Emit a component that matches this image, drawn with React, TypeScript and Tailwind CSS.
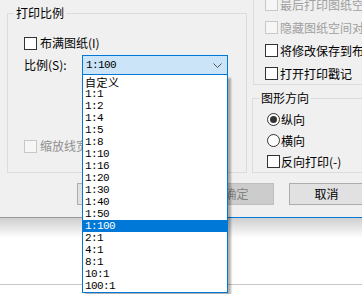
import clsx from "clsx";

const scales = [
  "自定义",
  "1:1",
  "1:2",
  "1:4",
  "1:5",
  "1:8",
  "1:10",
  "1:16",
  "1:20",
  "1:30",
  "1:40",
  "1:50",
  "1:100",
  "2:1",
  "4:1",
  "8:1",
  "10:1",
  "100:1",
];

const Check = ({ disabled }: { disabled?: boolean }) => (
  <span
    className={clsx(
      "w-[13px] h-[13px] border shrink-0",
      disabled ? "border-[#c8c8c8] bg-[#f6f6f6]" : "border-[#333] bg-white"
    )}
  />
);

const Radio = ({ checked }: { checked?: boolean }) => (
  <span className="w-[13px] h-[13px] rounded-full border border-[#333] bg-white shrink-0 flex items-center justify-center">
    {checked && <span className="w-[7px] h-[7px] rounded-full bg-[#333]" />}
  </span>
);

const App = () => {
  return (
    <div className="w-[362px] h-[294px] overflow-hidden bg-white text-[12px] leading-[16px] text-black font-['Noto_Sans_CJK_SC',sans-serif]">
      <div className="h-[217px] bg-[#f0f0f0] flex flex-col">
        <div className="flex items-start">
          {/* 打印比例 */}
          <fieldset className="ml-[7px] mt-[5px] w-[240px] h-[168px] border border-[#dcdcdc] m-0 p-0 pl-[16px] min-w-0">
            <legend className="ml-[-10px] px-[2px] leading-[16px]">打印比例</legend>
            <div className="mt-[14px] h-[16px] flex items-center gap-[3px]">
              <Check />
              <span>布满图纸(I)</span>
            </div>
            <div className="mt-[4px] h-[20px] flex items-center">
              <span className="w-[58px]">比例(S):</span>
              <div className="relative w-[146px] h-[20px]">
                <div className="h-full border border-[#0078d7] bg-[#cce4f7] pl-[3px] pr-[4px] flex items-center justify-between font-['Liberation_Mono',monospace] text-[11px] tracking-[-0.6px]">
                  <span>1:100</span>
                  <svg width="9" height="5" viewBox="0 0 9 5" className="mr-[1px]">
                    <polyline points="0.5,0.5 4.5,4.5 8.5,0.5" fill="none" stroke="#555" strokeWidth="1" />
                  </svg>
                </div>
                <ul className="absolute left-0 top-full z-10 w-[146px] bg-white border-x border-b border-[#0078d7] pt-[1px] shadow-[3px_3px_2px_rgba(0,0,0,0.3)]">
                  {scales.map((s) => (
                    <li
                      key={s}
                      className={clsx(
                        "h-[12px] pl-[2px] leading-[12px] text-[11px] whitespace-nowrap",
                        s === "自定义"
                          ? "font-['Noto_Sans_CJK_SC',sans-serif] tracking-[0.5px]"
                          : "font-['Liberation_Mono',monospace] tracking-[-0.6px]",
                        s === "1:100" ? "bg-[#0078d7] text-white" : "text-black"
                      )}
                    >
                      {s}
                    </li>
                  ))}
                </ul>
              </div>
            </div>
            <div className="mt-[63px] h-[16px] flex items-center gap-[3px] text-[#8f8f8f]">
              <Check disabled />
              <span>缩放线宽</span>
            </div>
          </fieldset>

          {/* right column */}
          <div className="ml-[5px] mt-[-20px] flex-1 min-w-0 flex flex-col">
            <div className="ml-[1px] h-[105px] border border-r-0 border-[#dcdcdc] pt-[12px] pl-[11px]">
              {[
                ["最后打印图纸空间", true],
                ["隐藏图纸空间对象", true],
                ["将修改保存到布局", false],
                ["打开打印戳记", false],
              ].map(([label, disabled]) => (
                <div
                  key={label as string}
                  className={clsx(
                    "h-[23px] flex items-center gap-[2px] whitespace-nowrap",
                    disabled ? "text-[#a0a0a0]" : "text-black"
                  )}
                >
                  <Check disabled={disabled as boolean} />
                  <span>{label}</span>
                </div>
              ))}
            </div>
            <fieldset className="mt-[5px] h-[83px] border border-r-0 border-[#dcdcdc] m-0 p-0 pl-[14px] min-w-0">
              <legend className="ml-[-8px] px-[2px] leading-[16px]">图形方向</legend>
              <div className="mt-[3px] h-[21px] flex items-center gap-[1px]">
                <Radio checked />
                <span>纵向</span>
              </div>
              <div className="h-[21px] flex items-center gap-[1px]">
                <Radio />
                <span>横向</span>
              </div>
              <div className="h-[21px] flex items-center gap-[1px] whitespace-nowrap">
                <Check />
                <span>反向打印(-)</span>
              </div>
            </fieldset>
          </div>
        </div>

        {/* buttons */}
        <div className="mt-[10px] flex h-[22px]">
          <button className="ml-[77px] w-[75px] shrink-0 border border-[#adadad] bg-[#e1e1e1]" />
          <button className="ml-[47px] w-[75px] shrink-0 border border-[#bfbfbf] bg-[#cccccc] text-[#838383]">
            确定
          </button>
          <button className="ml-[15px] w-[75px] shrink-0 border border-[#adadad] bg-[#e1e1e1]">
            取消
          </button>
        </div>
      </div>

      <div className="h-[1px] flex">
        <div className="w-[228px] bg-[#9a9a9a]" />
        <div className="flex-1 bg-[#0078d7]" />
      </div>
      <div className="h-[20px] bg-gradient-to-b from-[#cfcfcf] to-white" />
      <div className="h-[46px]" />
      <div className="h-[1px] bg-[#c8c8c8]" />
    </div>
  );
};

export default App;
